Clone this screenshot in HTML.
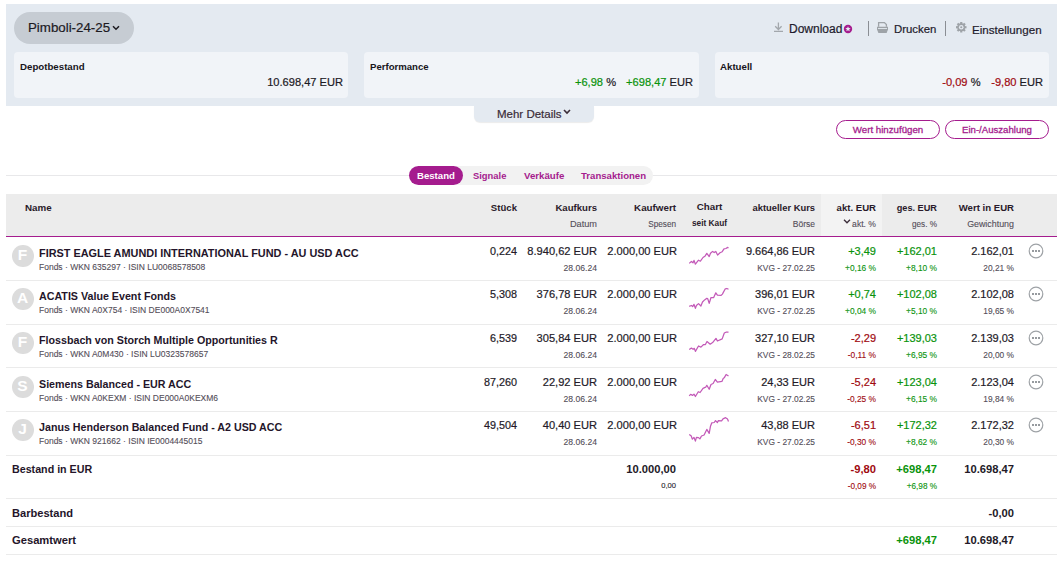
<!DOCTYPE html>
<html><head><meta charset="utf-8"><title>Depot</title>
<style>
html,body{margin:0;padding:0;background:#fff;}
body{width:1062px;height:565px;position:relative;overflow:hidden;font-family:"Liberation Sans", sans-serif;}
.t{position:absolute;white-space:nowrap;line-height:normal;}
.n{-webkit-text-stroke:0.2px currentColor;}
.m{-webkit-text-stroke:0.1px currentColor;}
</style></head><body>
<div style="position:absolute;left:6px;top:4px;width:1051px;height:102px;background:#e4eaf1;"></div>
<div style="position:absolute;left:14px;top:12px;width:120px;height:32px;background:#c6ccd3;border-radius:16px;"></div>
<div class="t n" style="left:28px;top:20px;font-size:13.3px;font-weight:normal;color:#1c1a1f;">Pimboli-24-25</div>
<svg style="position:absolute;left:112px;top:25px" width="8" height="6" viewBox="0 0 8 6"><path d="M1 1.2 L4 4.2 L7 1.2" fill="none" stroke="#1c1a1f" stroke-width="1.5"/></svg>
<div style="position:absolute;left:14px;top:52px;width:334px;height:46px;background:#f1f4f8;border-radius:4px;"></div>
<div style="position:absolute;left:364px;top:52px;width:335px;height:46px;background:#f1f4f8;border-radius:4px;"></div>
<div style="position:absolute;left:715px;top:52px;width:334px;height:46px;background:#f1f4f8;border-radius:4px;"></div>
<div class="t" style="left:20px;top:61px;font-size:9.7px;font-weight:bold;color:#18141c;">Depotbestand</div>
<div class="t" style="left:370px;top:61px;font-size:9.6px;font-weight:bold;color:#18141c;">Performance</div>
<div class="t" style="left:720px;top:61px;font-size:9.7px;font-weight:bold;color:#18141c;">Aktuell</div>
<div class="t n" style="right:719px;top:76px;font-size:11.1px;font-weight:normal;color:#1c1a24;">10.698,47 EUR</div>
<div class="t n" style="right:446px;top:76px;font-size:11.1px;font-weight:normal;color:#1c1a24;"><span style="color:#0a930c">+6,98</span> %</div>
<div class="t n" style="right:369px;top:76px;font-size:11.1px;font-weight:normal;color:#1c1a24;"><span style="color:#0a930c">+698,47</span> EUR</div>
<div class="t n" style="right:81.5px;top:76px;font-size:11.1px;font-weight:normal;color:#1c1a24;"><span style="color:#a00a10">-0,09</span> %</div>
<div class="t n" style="right:19px;top:76px;font-size:11.1px;font-weight:normal;color:#1c1a24;"><span style="color:#a00a10">-9,80</span> EUR</div>
<svg style="position:absolute;left:773px;top:21px" width="11" height="12" viewBox="0 0 11 12"><path d="M5.4 1.5 V8.8 M2.2 5.3 L5.4 8.5 L8.6 5.3 M1 10.3 H10" fill="none" stroke="#a2a7ac" stroke-width="1.3"/></svg>
<div class="t n" style="left:789px;top:22px;font-size:12px;font-weight:normal;color:#1e1a2c;">Download</div>
<svg style="position:absolute;left:843px;top:24px" width="10" height="10" viewBox="0 0 10 10"><circle cx="5" cy="5" r="4.2" fill="#a51c8e"/><path d="M5 2.2 L5.75 4 L7.7 4.1 L6.2 5.3 L6.7 7.2 L5 6.15 L3.3 7.2 L3.8 5.3 L2.3 4.1 L4.25 4 Z" fill="#e4eaf1"/></svg>
<div style="position:absolute;left:868px;top:21px;width:1px;height:15px;background:#8a8e94;"></div>
<svg style="position:absolute;left:876px;top:21px" width="13" height="13" viewBox="0 0 13 13"><path d="M2.6 5.8 V1.6 H8.4 L10.4 3.6 V5.8" fill="none" stroke="#9ea3a8" stroke-width="1.3"/><path d="M1 5.8 H12 V8.6 L10.6 12 H2.4 L1 8.6 Z" fill="#9ea3a8"/><rect x="2" y="7" width="9" height="0.9" fill="#e4eaf1"/></svg>
<div class="t n" style="left:894px;top:23px;font-size:11.4px;font-weight:normal;color:#1e1a2c;">Drucken</div>
<div style="position:absolute;left:945px;top:21px;width:1px;height:15px;background:#8a8e94;"></div>
<svg style="position:absolute;left:956px;top:22px" width="10.5" height="10.5" viewBox="0 0 10.5 10.5"><g fill="#9ea3a8"><circle cx="5.25" cy="5.25" r="3.9"/><rect x="4.15" y="0" width="2.2" height="10.5"/><rect x="0" y="4.15" width="10.5" height="2.2"/><rect x="4.15" y="0" width="2.2" height="10.5" transform="rotate(45 5.25 5.25)"/><rect x="4.15" y="0" width="2.2" height="10.5" transform="rotate(-45 5.25 5.25)"/></g><circle cx="5.25" cy="5.25" r="2.3" fill="#e4eaf1"/><circle cx="5.25" cy="5.25" r="1.1" fill="#9ea3a8"/></svg>
<div class="t n" style="left:972px;top:23px;font-size:11.6px;font-weight:normal;color:#1e1a2c;">Einstellungen</div>
<div style="position:absolute;left:474px;top:106px;width:120px;height:16px;background:#e4eaf1;border-radius:0 0 6px 6px;box-shadow:0 1px 1px rgba(0,0,0,0.08);"></div>
<div class="t n" style="left:497px;top:108px;font-size:11.5px;font-weight:normal;color:#3a2c38;">Mehr Details</div>
<svg style="position:absolute;left:563px;top:109px" width="8" height="6" viewBox="0 0 8 6"><path d="M1 1 L4 4 L7 1" fill="none" stroke="#3a2c38" stroke-width="1.6"/></svg>
<div style="position:absolute;left:836px;top:120px;width:104px;height:19px;box-sizing:border-box;border:1.2px solid #a51c8e;border-radius:10px;"></div>
<div class="t m" style="left:688px;width:400px;text-align:center;top:124px;font-size:9.7px;font-weight:normal;color:#a51c8e;-webkit-text-stroke:0.3px currentColor;">Wert hinzufügen</div>
<div style="position:absolute;left:945px;top:120px;width:104px;height:19px;box-sizing:border-box;border:1.2px solid #a51c8e;border-radius:10px;"></div>
<div class="t m" style="left:797px;width:400px;text-align:center;top:124px;font-size:9.6px;font-weight:normal;color:#a51c8e;-webkit-text-stroke:0.3px currentColor;">Ein-/Auszahlung</div>
<div style="position:absolute;left:6px;top:175px;width:1051px;height:1px;background:#e8e8ea;"></div>
<div style="position:absolute;left:409px;top:166px;width:244px;height:19px;background:#f2f2f2;border-radius:10px;"></div>
<div style="position:absolute;left:409px;top:166px;width:54px;height:19px;background:#a51c8e;border-radius:10px;"></div>
<div class="t" style="left:417px;top:170px;font-size:9.6px;font-weight:bold;color:#ffffff;">Bestand</div>
<div class="t" style="left:473px;top:170px;font-size:9.4px;font-weight:bold;color:#a51c8e;">Signale</div>
<div class="t" style="left:524px;top:170px;font-size:9.7px;font-weight:bold;color:#a51c8e;">Verkäufe</div>
<div class="t" style="left:581px;top:170px;font-size:9.6px;font-weight:bold;color:#a51c8e;">Transaktionen</div>
<div style="position:absolute;left:6px;top:194px;width:1051px;height:42px;background:#ececec;"></div>
<div style="position:absolute;left:821px;top:194px;width:61px;height:42px;background:#f3f3f3;"></div>
<div style="position:absolute;left:6px;top:236px;width:1051px;height:1px;background:#a51c8e;"></div>
<div class="t" style="left:25px;top:202px;font-size:9.8px;font-weight:bold;color:#2a1a2a;">Name</div>
<div class="t" style="right:545px;top:202px;font-size:9.6px;font-weight:bold;color:#2a1a2a;">Stück</div>
<div class="t" style="right:465px;top:202px;font-size:9.6px;font-weight:bold;color:#2a1a2a;">Kaufkurs</div>
<div class="t m" style="right:465px;top:219px;font-size:9.2px;font-weight:normal;color:#534d58;">Datum</div>
<div class="t" style="right:386px;top:202px;font-size:9.8px;font-weight:bold;color:#2a1a2a;">Kaufwert</div>
<div class="t m" style="right:386px;top:220px;font-size:8.2px;font-weight:normal;color:#534d58;">Spesen</div>
<div class="t" style="left:509.5px;width:400px;text-align:center;top:201px;font-size:9.8px;font-weight:bold;color:#2a1a2a;">Chart</div>
<div class="t" style="left:509.5px;width:400px;text-align:center;top:218px;font-size:8.3px;font-weight:bold;color:#2a1a2a;">seit Kauf</div>
<div class="t" style="right:247px;top:202px;font-size:9.4px;font-weight:bold;color:#2a1a2a;">aktueller Kurs</div>
<div class="t m" style="right:247px;top:219px;font-size:8.5px;font-weight:normal;color:#534d58;">Börse</div>
<div class="t" style="right:186px;top:202px;font-size:9.6px;font-weight:bold;color:#2a1a2a;">akt. EUR</div>
<div class="t m" style="right:186px;top:219px;font-size:8.6px;font-weight:normal;color:#534d58;">akt. %</div>
<svg style="position:absolute;left:843px;top:219px" width="8" height="5" viewBox="0 0 8 5"><path d="M1 0.8 L4 3.8 L7 0.8" fill="none" stroke="#3a2c38" stroke-width="1.3"/></svg>
<div class="t" style="right:125px;top:203px;font-size:9.2px;font-weight:bold;color:#2a1a2a;">ges. EUR</div>
<div class="t m" style="right:125px;top:220px;font-size:8.2px;font-weight:normal;color:#534d58;">ges. %</div>
<div class="t" style="right:48px;top:202px;font-size:9.6px;font-weight:bold;color:#2a1a2a;">Wert in EUR</div>
<div class="t m" style="right:48px;top:219px;font-size:8.9px;font-weight:normal;color:#534d58;">Gewichtung</div>
<div style="position:absolute;left:6px;top:280px;width:1051px;height:1px;background:#ebebeb;"></div>
<div style="position:absolute;left:12px;top:245px;width:21.5px;height:22px;background:#dcdcdc;border-radius:50%;"></div>
<div class="t" style="left:-177.5px;width:400px;text-align:center;top:246px;font-size:15.5px;font-weight:bold;color:#ffffff;">F</div>
<div class="t" style="left:39px;top:247px;font-size:10.9px;font-weight:bold;color:#24152a;">FIRST EAGLE AMUNDI INTERNATIONAL FUND - AU USD ACC</div>
<div class="t m" style="left:39px;top:262px;font-size:8.5px;font-weight:normal;color:#534d58;">Fonds · WKN 635297 · ISIN LU0068578508</div>
<div class="t n" style="right:545px;top:245px;font-size:10.8px;font-weight:normal;color:#231a28;">0,224</div>
<div class="t n" style="right:465px;top:245px;font-size:11.1px;font-weight:normal;color:#231a28;">8.940,62 EUR</div>
<div class="t m" style="right:465px;top:263px;font-size:8.6px;font-weight:normal;color:#534d58;">28.06.24</div>
<div class="t n" style="right:385px;top:245px;font-size:11.1px;font-weight:normal;color:#231a28;">2.000,00 EUR</div>
<div class="t n" style="right:247px;top:245px;font-size:11px;font-weight:normal;color:#231a28;">9.664,86 EUR</div>
<div class="t m" style="right:247px;top:263px;font-size:8.4px;font-weight:normal;color:#534d58;">KVG - 27.02.25</div>
<div class="t n" style="right:186px;top:245px;font-size:11px;font-weight:normal;color:#0a930c;">+3,49</div>
<div class="t m" style="right:186px;top:263px;font-size:8.4px;font-weight:normal;color:#0a930c;">+0,16 %</div>
<div class="t n" style="right:125px;top:245px;font-size:11px;font-weight:normal;color:#0a930c;">+162,01</div>
<div class="t m" style="right:125px;top:263px;font-size:8.4px;font-weight:normal;color:#0a930c;">+8,10 %</div>
<div class="t n" style="right:48px;top:245px;font-size:11px;font-weight:normal;color:#231a28;">2.162,01</div>
<div class="t m" style="right:48px;top:263px;font-size:8.4px;font-weight:normal;color:#534d58;">20,21 %</div>
<svg style="position:absolute;left:685px;top:240px" width="50" height="30"><polyline points="4.2,23.4 6.4,21.5 8.0,22.8 9.0,20.4 10.4,24.2 13.5,20.2 15.4,21.2 18.0,17.5 20.2,15.9 21.8,13.3 24.2,16.5 25.5,13.3 27.6,11.4 29.2,12.5 30.8,11.4 32.6,15.1 35.0,12.7 37.2,11.7 39.0,8.8 40.9,8.5 42.7,7.4 43.5,8.0" fill="none" stroke="#c35ab8" stroke-width="1.25" stroke-linejoin="round"/></svg>
<svg style="position:absolute;left:1028px;top:242px" width="17" height="17" viewBox="0 0 17 17"><circle cx="8" cy="9" r="6.8" fill="none" stroke="#9ea2a6" stroke-width="1.2"/><rect x="4" y="8" width="2" height="2" fill="#979b9f"/><rect x="7" y="8" width="2" height="2" fill="#979b9f"/><rect x="10" y="8" width="2" height="2" fill="#979b9f"/></svg>
<div style="position:absolute;left:6px;top:324px;width:1051px;height:1px;background:#ebebeb;"></div>
<div style="position:absolute;left:12px;top:288px;width:21.5px;height:22px;background:#dcdcdc;border-radius:50%;"></div>
<div class="t" style="left:-177.5px;width:400px;text-align:center;top:289px;font-size:15.5px;font-weight:bold;color:#ffffff;">A</div>
<div class="t" style="left:39px;top:290px;font-size:10.7px;font-weight:bold;color:#24152a;">ACATIS Value Event Fonds</div>
<div class="t m" style="left:39px;top:305px;font-size:8.5px;font-weight:normal;color:#534d58;">Fonds · WKN A0X754 · ISIN DE000A0X7541</div>
<div class="t n" style="right:545px;top:288px;font-size:10.8px;font-weight:normal;color:#231a28;">5,308</div>
<div class="t n" style="right:465px;top:288px;font-size:11.1px;font-weight:normal;color:#231a28;">376,78 EUR</div>
<div class="t m" style="right:465px;top:306px;font-size:8.6px;font-weight:normal;color:#534d58;">28.06.24</div>
<div class="t n" style="right:385px;top:288px;font-size:11.1px;font-weight:normal;color:#231a28;">2.000,00 EUR</div>
<div class="t n" style="right:247px;top:288px;font-size:11px;font-weight:normal;color:#231a28;">396,01 EUR</div>
<div class="t m" style="right:247px;top:306px;font-size:8.4px;font-weight:normal;color:#534d58;">KVG - 27.02.25</div>
<div class="t n" style="right:186px;top:288px;font-size:11px;font-weight:normal;color:#0a930c;">+0,74</div>
<div class="t m" style="right:186px;top:306px;font-size:8.4px;font-weight:normal;color:#0a930c;">+0,04 %</div>
<div class="t n" style="right:125px;top:288px;font-size:11px;font-weight:normal;color:#0a930c;">+102,08</div>
<div class="t m" style="right:125px;top:306px;font-size:8.4px;font-weight:normal;color:#0a930c;">+5,10 %</div>
<div class="t n" style="right:48px;top:288px;font-size:11px;font-weight:normal;color:#231a28;">2.102,08</div>
<div class="t m" style="right:48px;top:306px;font-size:8.4px;font-weight:normal;color:#534d58;">19,65 %</div>
<svg style="position:absolute;left:685px;top:284px" width="50" height="30"><polyline points="4.2,22.3 6.4,21.5 7.7,22.6 9.0,20.4 10.4,24.4 11.4,21.5 13.5,19.6 15.9,22.0 17.5,18.0 19.6,15.9 21.8,14.3 22.8,14.9 24.2,19.4 26.0,13.5 28.7,13.5 30.8,8.8 32.4,11.1 36.1,11.4 37.4,10.1 40.3,4.8 41.9,4.5 43.5,5.3" fill="none" stroke="#c35ab8" stroke-width="1.25" stroke-linejoin="round"/></svg>
<svg style="position:absolute;left:1028px;top:285px" width="17" height="17" viewBox="0 0 17 17"><circle cx="8" cy="9" r="6.8" fill="none" stroke="#9ea2a6" stroke-width="1.2"/><rect x="4" y="8" width="2" height="2" fill="#979b9f"/><rect x="7" y="8" width="2" height="2" fill="#979b9f"/><rect x="10" y="8" width="2" height="2" fill="#979b9f"/></svg>
<div style="position:absolute;left:6px;top:367px;width:1051px;height:1px;background:#ebebeb;"></div>
<div style="position:absolute;left:12px;top:332px;width:21.5px;height:22px;background:#dcdcdc;border-radius:50%;"></div>
<div class="t" style="left:-177.5px;width:400px;text-align:center;top:333px;font-size:15.5px;font-weight:bold;color:#ffffff;">F</div>
<div class="t" style="left:39px;top:334px;font-size:10.7px;font-weight:bold;color:#24152a;">Flossbach von Storch Multiple Opportunities R</div>
<div class="t m" style="left:39px;top:349px;font-size:8.5px;font-weight:normal;color:#534d58;">Fonds · WKN A0M430 · ISIN LU0323578657</div>
<div class="t n" style="right:545px;top:332px;font-size:10.8px;font-weight:normal;color:#231a28;">6,539</div>
<div class="t n" style="right:465px;top:332px;font-size:11.1px;font-weight:normal;color:#231a28;">305,84 EUR</div>
<div class="t m" style="right:465px;top:350px;font-size:8.6px;font-weight:normal;color:#534d58;">28.06.24</div>
<div class="t n" style="right:385px;top:332px;font-size:11.1px;font-weight:normal;color:#231a28;">2.000,00 EUR</div>
<div class="t n" style="right:247px;top:332px;font-size:11px;font-weight:normal;color:#231a28;">327,10 EUR</div>
<div class="t m" style="right:247px;top:350px;font-size:8.4px;font-weight:normal;color:#534d58;">KVG - 28.02.25</div>
<div class="t n" style="right:186px;top:332px;font-size:11px;font-weight:normal;color:#a00a10;">-2,29</div>
<div class="t m" style="right:186px;top:350px;font-size:8.4px;font-weight:normal;color:#a00a10;">-0,11 %</div>
<div class="t n" style="right:125px;top:332px;font-size:11px;font-weight:normal;color:#0a930c;">+139,03</div>
<div class="t m" style="right:125px;top:350px;font-size:8.4px;font-weight:normal;color:#0a930c;">+6,95 %</div>
<div class="t n" style="right:48px;top:332px;font-size:11px;font-weight:normal;color:#231a28;">2.139,03</div>
<div class="t m" style="right:48px;top:350px;font-size:8.4px;font-weight:normal;color:#534d58;">20,00 %</div>
<svg style="position:absolute;left:685px;top:328px" width="50" height="30"><polyline points="4.2,21.5 6.4,20.1 8.0,21.2 9.3,20.4 10.4,23.4 13.5,18.0 15.9,19.1 18.6,16.5 20.4,16.5 22.0,13.5 25.2,16.2 27.6,14.6 31.0,10.4 32.4,13.0 37.2,10.9 39.3,5.0 41.4,4.0 43.5,4.0" fill="none" stroke="#c35ab8" stroke-width="1.25" stroke-linejoin="round"/></svg>
<svg style="position:absolute;left:1028px;top:329px" width="17" height="17" viewBox="0 0 17 17"><circle cx="8" cy="9" r="6.8" fill="none" stroke="#9ea2a6" stroke-width="1.2"/><rect x="4" y="8" width="2" height="2" fill="#979b9f"/><rect x="7" y="8" width="2" height="2" fill="#979b9f"/><rect x="10" y="8" width="2" height="2" fill="#979b9f"/></svg>
<div style="position:absolute;left:6px;top:411px;width:1051px;height:1px;background:#ebebeb;"></div>
<div style="position:absolute;left:12px;top:376px;width:21.5px;height:22px;background:#dcdcdc;border-radius:50%;"></div>
<div class="t" style="left:-177.5px;width:400px;text-align:center;top:377px;font-size:15.5px;font-weight:bold;color:#ffffff;">S</div>
<div class="t" style="left:39px;top:378px;font-size:10.7px;font-weight:bold;color:#24152a;">Siemens Balanced - EUR ACC</div>
<div class="t m" style="left:39px;top:393px;font-size:8.5px;font-weight:normal;color:#534d58;">Fonds · WKN A0KEXM · ISIN DE000A0KEXM6</div>
<div class="t n" style="right:545px;top:376px;font-size:10.8px;font-weight:normal;color:#231a28;">87,260</div>
<div class="t n" style="right:465px;top:376px;font-size:11.1px;font-weight:normal;color:#231a28;">22,92 EUR</div>
<div class="t m" style="right:465px;top:394px;font-size:8.6px;font-weight:normal;color:#534d58;">28.06.24</div>
<div class="t n" style="right:385px;top:376px;font-size:11.1px;font-weight:normal;color:#231a28;">2.000,00 EUR</div>
<div class="t n" style="right:247px;top:376px;font-size:11px;font-weight:normal;color:#231a28;">24,33 EUR</div>
<div class="t m" style="right:247px;top:394px;font-size:8.4px;font-weight:normal;color:#534d58;">KVG - 27.02.25</div>
<div class="t n" style="right:186px;top:376px;font-size:11px;font-weight:normal;color:#a00a10;">-5,24</div>
<div class="t m" style="right:186px;top:394px;font-size:8.4px;font-weight:normal;color:#a00a10;">-0,25 %</div>
<div class="t n" style="right:125px;top:376px;font-size:11px;font-weight:normal;color:#0a930c;">+123,04</div>
<div class="t m" style="right:125px;top:394px;font-size:8.4px;font-weight:normal;color:#0a930c;">+6,15 %</div>
<div class="t n" style="right:48px;top:376px;font-size:11px;font-weight:normal;color:#231a28;">2.123,04</div>
<div class="t m" style="right:48px;top:394px;font-size:8.4px;font-weight:normal;color:#534d58;">19,84 %</div>
<svg style="position:absolute;left:685px;top:371px" width="50" height="30"><polyline points="4.2,24.9 5.6,23.4 7.7,24.4 9.0,23.1 10.4,25.5 13.3,20.7 15.1,21.5 18.0,17.3 20.7,16.2 21.8,14.3 24.2,18.3 26.0,13.5 28.1,12.5 30.3,8.5 32.4,11.1 36.9,10.4 38.2,7.4 39.5,6.4 41.1,3.5 43.5,5.0" fill="none" stroke="#c35ab8" stroke-width="1.25" stroke-linejoin="round"/></svg>
<svg style="position:absolute;left:1028px;top:373px" width="17" height="17" viewBox="0 0 17 17"><circle cx="8" cy="9" r="6.8" fill="none" stroke="#9ea2a6" stroke-width="1.2"/><rect x="4" y="8" width="2" height="2" fill="#979b9f"/><rect x="7" y="8" width="2" height="2" fill="#979b9f"/><rect x="10" y="8" width="2" height="2" fill="#979b9f"/></svg>
<div style="position:absolute;left:6px;top:455px;width:1051px;height:1px;background:#ebebeb;"></div>
<div style="position:absolute;left:12px;top:419px;width:21.5px;height:22px;background:#dcdcdc;border-radius:50%;"></div>
<div class="t" style="left:-177.5px;width:400px;text-align:center;top:420px;font-size:15.5px;font-weight:bold;color:#ffffff;">J</div>
<div class="t" style="left:39px;top:421px;font-size:10.7px;font-weight:bold;color:#24152a;">Janus Henderson Balanced Fund - A2 USD ACC</div>
<div class="t m" style="left:39px;top:436px;font-size:8.5px;font-weight:normal;color:#534d58;">Fonds · WKN 921662 · ISIN IE0004445015</div>
<div class="t n" style="right:545px;top:419px;font-size:10.8px;font-weight:normal;color:#231a28;">49,504</div>
<div class="t n" style="right:465px;top:419px;font-size:11.1px;font-weight:normal;color:#231a28;">40,40 EUR</div>
<div class="t m" style="right:465px;top:437px;font-size:8.6px;font-weight:normal;color:#534d58;">28.06.24</div>
<div class="t n" style="right:385px;top:419px;font-size:11.1px;font-weight:normal;color:#231a28;">2.000,00 EUR</div>
<div class="t n" style="right:247px;top:419px;font-size:11px;font-weight:normal;color:#231a28;">43,88 EUR</div>
<div class="t m" style="right:247px;top:437px;font-size:8.4px;font-weight:normal;color:#534d58;">KVG - 27.02.25</div>
<div class="t n" style="right:186px;top:419px;font-size:11px;font-weight:normal;color:#a00a10;">-6,51</div>
<div class="t m" style="right:186px;top:437px;font-size:8.4px;font-weight:normal;color:#a00a10;">-0,30 %</div>
<div class="t n" style="right:125px;top:419px;font-size:11px;font-weight:normal;color:#0a930c;">+172,32</div>
<div class="t m" style="right:125px;top:437px;font-size:8.4px;font-weight:normal;color:#0a930c;">+8,62 %</div>
<div class="t n" style="right:48px;top:419px;font-size:11px;font-weight:normal;color:#231a28;">2.172,32</div>
<div class="t m" style="right:48px;top:437px;font-size:8.4px;font-weight:normal;color:#534d58;">20,30 %</div>
<svg style="position:absolute;left:685px;top:414px" width="50" height="30"><polyline points="4.2,20.4 6.1,21.8 7.4,25.2 9.0,23.4 10.4,27.1 11.4,23.4 13.5,23.6 14.9,24.9 16.5,22.0 19.1,21.0 21.8,15.4 24.2,19.4 25.5,12.2 26.8,8.8 29.2,8.5 30.5,6.6 32.4,8.5 33.4,6.6 36.6,6.9 38.0,4.8 40.6,3.7 42.5,5.0 43.5,7.4" fill="none" stroke="#c35ab8" stroke-width="1.25" stroke-linejoin="round"/></svg>
<svg style="position:absolute;left:1028px;top:416px" width="17" height="17" viewBox="0 0 17 17"><circle cx="8" cy="9" r="6.8" fill="none" stroke="#9ea2a6" stroke-width="1.2"/><rect x="4" y="8" width="2" height="2" fill="#979b9f"/><rect x="7" y="8" width="2" height="2" fill="#979b9f"/><rect x="10" y="8" width="2" height="2" fill="#979b9f"/></svg>
<div style="position:absolute;left:6px;top:498px;width:1051px;height:1px;background:#ebebeb;"></div>
<div style="position:absolute;left:6px;top:526px;width:1051px;height:1px;background:#ebebeb;"></div>
<div style="position:absolute;left:6px;top:554px;width:1051px;height:1px;background:#ebebeb;"></div>
<div class="t" style="left:12px;top:463px;font-size:10.7px;font-weight:bold;color:#24152a;">Bestand in EUR</div>
<div class="t" style="left:12px;top:507px;font-size:11.1px;font-weight:bold;color:#24152a;">Barbestand</div>
<div class="t" style="left:12px;top:534px;font-size:11.2px;font-weight:bold;color:#24152a;">Gesamtwert</div>
<div class="t" style="right:386px;top:463px;font-size:11.2px;font-weight:bold;color:#231a28;">10.000,00</div>
<div class="t m" style="right:386px;top:481px;font-size:7.6px;font-weight:normal;color:#231a28;">0,00</div>
<div class="t" style="right:186px;top:463px;font-size:11.2px;font-weight:bold;color:#a00a10;">-9,80</div>
<div class="t m" style="right:186px;top:482px;font-size:8.2px;font-weight:normal;color:#a00a10;">-0,09 %</div>
<div class="t" style="right:125px;top:463px;font-size:11.2px;font-weight:bold;color:#0a930c;">+698,47</div>
<div class="t m" style="right:125px;top:482px;font-size:8.2px;font-weight:normal;color:#0a930c;">+6,98 %</div>
<div class="t" style="right:48px;top:463px;font-size:11.2px;font-weight:bold;color:#231a28;">10.698,47</div>
<div class="t" style="right:48px;top:507px;font-size:11.2px;font-weight:bold;color:#231a28;">-0,00</div>
<div class="t" style="right:125px;top:534px;font-size:11.2px;font-weight:bold;color:#0a930c;">+698,47</div>
<div class="t" style="right:48px;top:534px;font-size:11.2px;font-weight:bold;color:#231a28;">10.698,47</div>
</body></html>
